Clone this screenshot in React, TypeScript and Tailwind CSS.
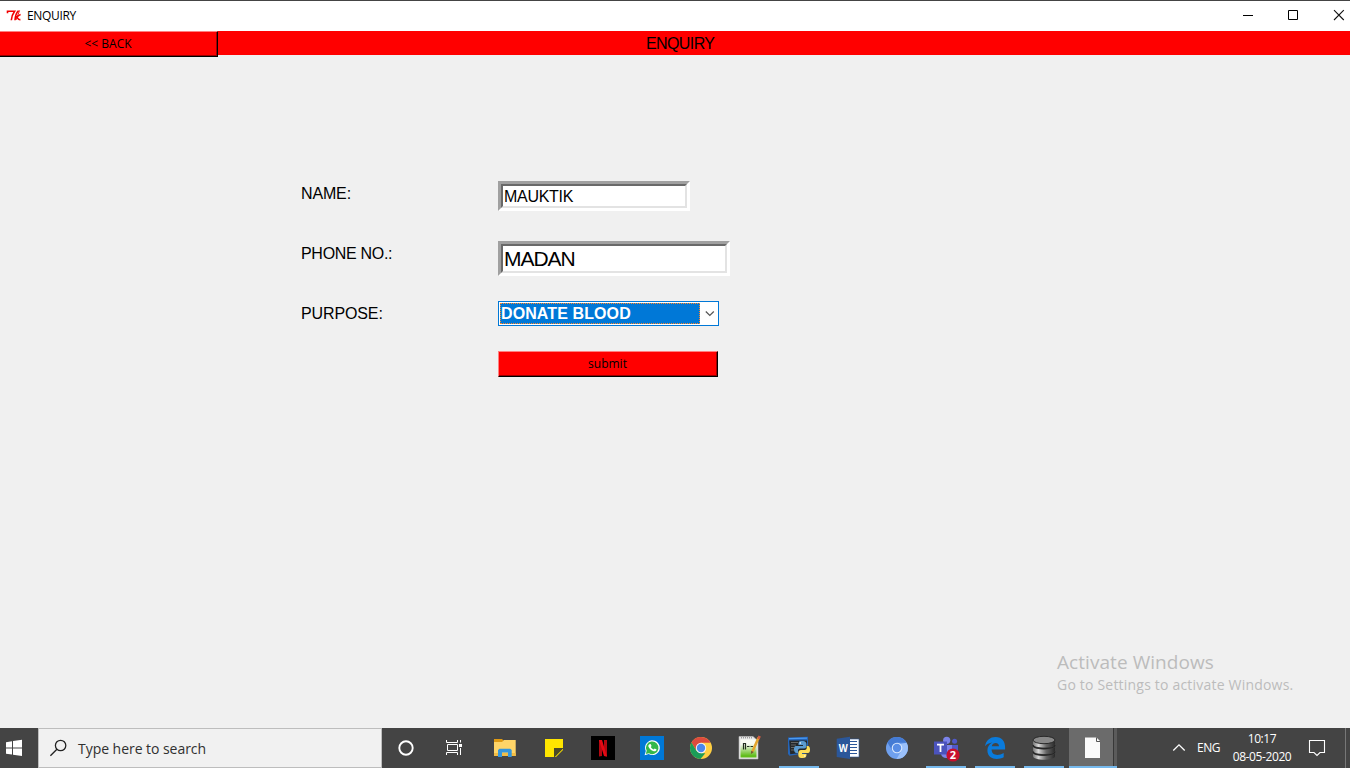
import type { ReactNode } from 'react';

const ui = "font-['Open_Sans','Noto_Sans',sans-serif]";
const arial = "font-['Liberation_Sans',Arial,sans-serif]";

function Glyph({ children }: { children: ReactNode }) {
  return (
    <svg width="49" height="40" viewBox="0 0 49 40" className="block" aria-hidden="true">
      {children}
    </svg>
  );
}

function TaskItem({ children, running = false }: { children: ReactNode; running?: boolean }) {
  return (
    <div className="relative h-10 w-[49px] shrink-0">
      <Glyph>{children}</Glyph>
      {running && <span className="absolute bottom-0 left-[5px] h-0.5 w-10 bg-[#76b9ed]" />}
    </div>
  );
}

function TitleBar() {
  return (
    <header className="flex h-[31px] shrink-0 items-center border-t border-[#444] bg-white">
      <svg width="27" height="30" viewBox="0 1 27 30" aria-hidden="true">
        <path
          d="M7.5 13.2V11.2H14.6C12.8 13.6 11.6 16 11.3 20.2M18.6 10.6C16.4 12.5 15.3 16 15 20.2M20.6 14.6C19.4 15 18.2 16 16.8 17C17.9 17.6 17.6 19.8 20.4 19.6"
          fill="none"
          stroke="#f00000"
          strokeWidth="1.6"
        />
        <path d="M16 20L19.6 10.4" stroke="#f00000" strokeWidth=".9" />
      </svg>
      <h1 className={`${ui} w-20 text-[12px] leading-[30px] tracking-[-0.35px] text-black`}>ENQUIRY</h1>
      <svg className="ml-auto" width="110" height="30" viewBox="1240 1 110 30" aria-hidden="true">
        <path d="M1243 15.5H1253M1288.5 10.5H1297.5V19.5H1288.5Z" fill="none" stroke="#000" />
        <path d="M1334 10.2L1343.8 20M1343.8 10.2L1334 20" stroke="#111" strokeWidth="1.1" />
      </svg>
    </header>
  );
}

function RedButton({ label, className }: { label: string; className: string }) {
  return (
    <button
      className={`${ui} ${className} block h-[26px] border border-t-[#ff8080] border-l-[#ff8080] border-r-black border-b-black bg-[#f00] p-0 text-[12px] text-black`}
    >
      <span className="flex h-full items-center justify-center border-r border-b border-[#9c0000]">{label}</span>
    </button>
  );
}

function Entry({ value, className, textClass }: { value: string; className: string; textClass: string }) {
  return (
    <div className={`${className} border-[3px] border-t-[#a0a0a0] border-r-white border-b-white border-l-[#a0a0a0]`}>
      <div className="flex h-full items-center border-2 border-t-[#696969] border-r-[#e3e3e3] border-b-[#e3e3e3] border-l-[#696969] bg-white pl-px text-black">
        <span className={textClass}>{value}</span>
      </div>
    </div>
  );
}

function Form() {
  return (
    <section className={`${arial} grid grid-cols-[197px_1fr] pt-[126px] pl-[301px] text-[16px] text-black`}>
      <div className="h-[60px] pt-[3px] leading-[19px] tracking-[-0.15px]">NAME:</div>
      <div>
        <Entry value="MAUKTIK" className="h-[30px] w-[192px]" textClass="pt-0.5 text-[16px] leading-[18px] tracking-[-0.3px]" />
      </div>
      <div className="h-[60px] pt-[3px] leading-[19px] tracking-[-0.3px]">PHONE NO.:</div>
      <div>
        <Entry value="MADAN" className="h-[35px] w-[232px]" textClass="text-[21px] leading-[24px] tracking-[-1.05px]" />
      </div>
      <div className="h-[50px] pt-[3px] leading-[19px] tracking-[-0.12px]">PURPOSE:</div>
      <div>
        <div className="flex h-[25px] w-[221px] border border-[#0078d7] bg-white p-px">
          <div className="flex h-[21px] w-[200px] items-center border border-dotted border-[#ff8728] bg-[#0078d7] font-bold tracking-[0.1px] text-white">
            DONATE BLOOD
          </div>
          <svg width="17" height="21" viewBox="0 0 17 21" aria-hidden="true">
            <path d="M5.8 8.5L9.8 12.5L13.8 8.5" fill="none" stroke="#555" strokeWidth="1.2" />
          </svg>
        </div>
      </div>
      <div />
      <RedButton label="submit" className="w-[220px]" />
    </section>
  );
}

function Taskbar() {
  return (
    <footer className={`${ui} flex h-10 shrink-0 bg-[#444] text-white`}>
      <svg width="38" height="40" viewBox="0 0 38 40" aria-hidden="true">
        <path d="M6 14.2L12 13.3V19.4H6ZM13 13.1L22 11.8V19.4H13ZM6 20.4H12V26.6L6 25.7ZM13 20.4H22V28.1L13 26.8Z" fill="#fff" />
      </svg>
      <div className="flex w-[344px] items-center border border-[#bdbdbd] bg-[#f1f1f1] text-[#303030]">
        <svg width="39" height="38" viewBox="0 0 39 38" aria-hidden="true">
          <circle cx="21.6" cy="16.5" r="5.2" fill="none" stroke="#222" strokeWidth="1.3" />
          <path d="M17.9 20.3L11.4 26.8" stroke="#222" strokeWidth="1.3" />
        </svg>
        <span className="text-[14px] tracking-[-0.04px] whitespace-nowrap">Type here to search</span>
      </div>

      <TaskItem>
        <circle cx="24" cy="20" r="6.7" fill="none" stroke="#fff" strokeWidth="1.9" />
      </TaskItem>
      <TaskItem>
        <path d="M16.5 16.5H26.5V22.5H16.5ZM15.5 12V14.5H26.5V12M15.5 27V24.5H26.5V27M29.5 12V14.5M29.5 20V27" fill="none" stroke="#fff" />
        <path d="M28 16H31V19H28Z" fill="#fff" />
      </TaskItem>
      <TaskItem>
        <path d="M14 11H22L24 13H35V16H14Z" fill="#e09b13" />
        <path d="M14 14H22L24 12H35.7V28H14Z" fill="#ffd568" />
        <path d="M14 25H35.7V28H14Z" fill="#f2bd44" />
        <path d="M18 29V22L19.5 20.7H30.2L31.7 22V29H28V24.5H22V29Z" fill="#3596dc" />
      </TaskItem>
      <TaskItem>
        <path d="M16 11H34V29H16Z" fill="#ffe600" />
        <path d="M25 20H34V29H25Z" fill="#4a4928" />
        <path d="M25.8 29L34 20.8V29Z" fill="#ffe600" />
        <path d="M27 29L34 22V29Z" fill="#444" />
      </TaskItem>
      <TaskItem>
        <path d="M13 8H37V32H13Z" fill="#000" />
        <path d="M21 12H24V28L21 28.4ZM26 12H29V28.4L26 28Z" fill="#b20710" />
        <path d="M21 12H24L29 28.4L26 28Z" fill="#e50914" />
      </TaskItem>
      <TaskItem>
        <path d="M13 8H37V32H13Z" fill="#0078d7" />
        <path d="M17.6 27.3L18.8 23A7.4 7.4 0 1 1 21.7 26.1Z" fill="#fff" />
        <path d="M18.8 26.1L19.7 22.8A6.3 6.3 0 1 1 22 25.2Z" fill="#34b84a" />
        <path d="M22.4 16.2L23.6 16L24.6 18L23.8 19C24.4 20.2 25.4 21 26.7 21.5L27.7 20.5L29.6 21.5C29.4 23.2 27.7 23.7 26.1 23C23.8 22.1 22.3 20.5 21.5 18.7C21.1 17.6 21.6 16.7 22.4 16.2Z" fill="#fff" />
      </TaskItem>
      <TaskItem>
        <circle cx="25" cy="20" r="11" fill="#ffcf42" />
        <path d="M25 9A11 11 0 0 1 34.6 14.8H25L20.3 22.6L15.5 14.4A11 11 0 0 1 25 9Z" fill="#dd4b3e" />
        <path d="M15.5 14.4L20.4 22.7L25 25.3H29.3L24.5 31A11 11 0 0 1 15.5 14.4Z" fill="#1b9d58" />
        <circle cx="25" cy="20" r="5.2" fill="#f5f5f5" />
        <circle cx="25" cy="20" r="4.2" fill="#4a87ed" />
      </TaskItem>
      <TaskItem>
        <defs>
          <linearGradient id="note" x2="0" y2="1">
            <stop offset=".25" stopColor="#f8fbf2" />
            <stop offset=".9" stopColor="#62bd1c" />
          </linearGradient>
        </defs>
        <path d="M14 8.5H28L33 13V31H14Z" fill="#e9e9e9" stroke="#bbb" strokeWidth=".6" />
        <path d="M15.5 11.5H31.5V29.5H15.5Z" fill="url(#note)" />
        <path d="M16 9.8H28" stroke="#777" strokeDasharray="1 1" />
        <path d="M18.5 21.5V15.5H20.5V21.5M22 18.5H24.5M25.5 18.5H28" fill="none" stroke="#253020" strokeWidth="1.2" />
        <path d="M33.6 9.5L27.5 23.5" stroke="#e5a52b" strokeWidth="2.6" />
        <path d="M34.6 8L33.4 11" stroke="#cf5c43" strokeWidth="2.6" />
        <path d="M26.2 22.8L26 26L28.8 24Z" fill="#73542e" />
      </TaskItem>
      <TaskItem running>
        <path d="M14 9.5L34 8.7V25L15.5 27.8L14 26Z" fill="#2565b8" />
        <path d="M15.2 12.5H33V24L16.2 26.2Z" fill="#24282b" />
        <path d="M15 10.7L33 10.1" stroke="#4c9af0" strokeWidth="1.3" />
        <path d="M17 14.5H24M17 17H22M17 19.5H20.5M17 22H20" stroke="#777" strokeWidth=".8" />
        <path d="M28 13C24.5 13 24.5 14 24.5 17H29V18H22C19 18 19.5 25 22.5 25H24V22.5C24 21 25.5 20.5 27 20.5H30C32 20.5 32.5 19 32.5 17C32.5 14 31.5 13 28 13Z" fill="#5b9bd0" />
        <path d="M28 30C31.5 30 32.5 29.5 32.5 26H28V25H34C37 25 36.5 18 34 18H32.7V20C32.7 21.5 31.5 22 30 22H27C25 22 24.3 23.5 24.3 26C24.3 29 25 30 28 30Z" fill="#ffde57" />
        <circle cx="26.3" cy="15" r=".8" fill="#fff" />
        <circle cx="30.8" cy="28" r=".7" fill="#fff" />
      </TaskItem>
      <TaskItem>
        <path d="M25 11H36V29H25Z" fill="#fff" stroke="#2b579a" strokeWidth=".6" />
        <path d="M27 13.5H34M27 16.5H34M27 19.5H34M27 22.5H34M27 25.5H34" stroke="#2b579a" strokeWidth="1.2" />
        <path d="M13.7 10.8L27 8.7V31L13.7 29Z" fill="#2b579a" />
        <text x="15.8" y="23.7" fontFamily="Open Sans" fontWeight="700" fontSize="10" textLength="9" lengthAdjust="spacingAndGlyphs" fill="#fff">W</text>
      </TaskItem>
      <TaskItem>
        <circle cx="25" cy="20" r="11" fill="#6fa0ee" />
        <path d="M15.4 14.5A11 11 0 0 1 34.6 14.8H25L20.4 22.7Z" fill="#447bd4" />
        <path d="M34.6 14.8A11 11 0 0 1 24.5 31L29.5 22.6L29 16Z" fill="#9ac0fa" />
        <circle cx="25" cy="20" r="5.3" fill="#d8e7fc" />
        <circle cx="25" cy="20" r="4.2" fill="#588de5" />
      </TaskItem>
      <TaskItem running>
        <circle cx="25.7" cy="12.3" r="3.6" fill="#7b83eb" />
        <circle cx="33.6" cy="13.3" r="2.5" fill="#5059c9" />
        <path d="M29 17H37V24C37 27 33 28 30 26Z" fill="#5059c9" />
        <path d="M20 17H31V25C31 31 21 32 20 26Z" fill="#7b83eb" />
        <path d="M13 13.5H26V26.5H13Z" fill="#4b53bc" />
        <path d="M16 16.7H23M19.5 16.7V24" stroke="#fff" strokeWidth="1.8" />
        <circle cx="32" cy="27" r="6.6" fill="#c8102e" />
        <text x="32" y="31" textAnchor="middle" fontFamily="Open Sans" fontWeight="700" fontSize="11" fill="#fff">2</text>
      </TaskItem>
      <TaskItem running>
        <path d="M15 18.3C16 12.5 20 9.1 25.6 9.1C32 9.1 35.1 13.8 35.1 19.3V21.6H21.6C21.8 28.2 29 28 33.7 25.1V29.3C27.5 32.5 17.4 31.5 17.4 22.5C17.4 18.7 19.3 16 22.4 14.5C19.2 14.8 16.7 16.2 15 18.3ZM21.8 18.2H29C28.8 13.7 22.5 14 21.8 18.2Z" fill="#0a7bdc" fillRule="evenodd" />
      </TaskItem>
      <TaskItem running>
        <defs>
          <linearGradient id="metal">
            <stop stopColor="#777" />
            <stop offset=".25" stopColor="#d8d8d8" />
            <stop offset=".6" stopColor="#666" />
            <stop offset="1" stopColor="#292929" />
          </linearGradient>
        </defs>
        <path d="M14 25V28C14 33 36 33 36 28V25C36 29 14 29 14 25ZM14 18.5V22.5C14 27.3 36 27.3 36 22.5V18.5C36 22.5 14 22.5 14 18.5ZM14 12V16C14 20.8 36 20.8 36 16V12Z" fill="url(#metal)" />
        <ellipse cx="25" cy="12" rx="11" ry="3.7" fill="#888" stroke="#292929" strokeWidth="1" />
        <path d="M14 17C14 21.7 36 21.7 36 17M14 23.6C14 28.3 36 28.3 36 23.6" fill="none" stroke="#252525" strokeWidth="1.2" />
      </TaskItem>
      <div className="flex h-10 w-[49px] shrink-0">
        <svg width="49" height="40" viewBox="0 0 49 40" aria-hidden="true">
          <path d="M1 0H45V40H1Z" fill="#6b6b6b" />
          <path d="M45 0H46V40H45Z" fill="#383838" />
          <path d="M46 0H49V40H46Z" fill="#5b5b5b" />
          <path d="M1 38H49V40H1Z" fill="#76b9ed" />
          <path d="M17 9.5H28.5L32 13V30H17Z" fill="#fafafa" />
          <path d="M28.5 9.5V13.5H32" fill="none" stroke="#555" />
        </svg>
      </div>

      <div className="ml-auto flex h-10 w-[178px] items-center text-[12px]">
        <svg width="25" height="40" viewBox="0 0 25 40" aria-hidden="true">
          <path d="M1.3 22.5L7 16.8L12.7 22.5" fill="none" stroke="#fff" strokeWidth="1.3" />
        </svg>
        <span className="w-[25px] tracking-[-0.5px]">ENG</span>
        <div className="w-[80px] text-center leading-[18px] tracking-[-0.4px]">
          <div>10:17</div>
          <div>08-05-2020</div>
        </div>
        <svg width="48" height="40" viewBox="1302 728 48 40" aria-hidden="true">
          <path d="M1309.5 740.5H1324.5V752.5H1320L1317 755.5L1314 752.5H1309.5Z" fill="none" stroke="#fff" strokeWidth="1.1" />
          <path d="M1345.5 728V768" stroke="#777" />
        </svg>
      </div>
    </footer>
  );
}

export default function App() {
  return (
    <div className="flex h-[768px] w-[1350px] flex-col overflow-hidden bg-[#f0f0f0]">
      <TitleBar />
      <div className="flex h-6 shrink-0 items-start">
        <RedButton label="<< BACK" className="w-[218px] shrink-0 border-l-0 pr-0" />
        <div className={`${arial} h-6 flex-1 bg-[#f00] pt-px pl-[428px] text-[16px] leading-[23px] tracking-[-0.6px] text-black`}>
          ENQUIRY
        </div>
      </div>
      <Form />
      <aside className={`${ui} mt-auto mb-[33px] ml-[1057px] whitespace-nowrap text-[#bcbcbc]`}>
        <p className="text-[19px] leading-[26px] tracking-[0.06px]">Activate Windows</p>
        <p className="text-[14px] leading-[20px] tracking-[0.2px]">Go to Settings to activate Windows.</p>
      </aside>
      <Taskbar />
    </div>
  );
}
